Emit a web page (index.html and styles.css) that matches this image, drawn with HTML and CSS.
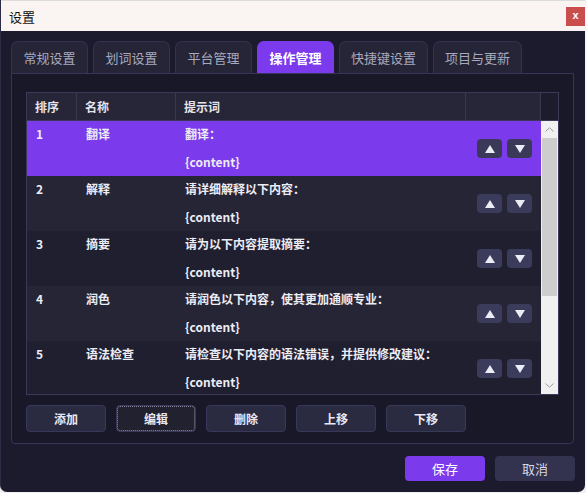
FILE: index.html
```html
<!DOCTYPE html>
<html lang="zh">
<head>
<meta charset="utf-8">
<title>设置</title>
<link rel="stylesheet" href="styles.css">
</head>
<body>
<div class="window">
  <div class="titlebar">
    <span class="title">设置</span>
    <span class="close">x</span>
  </div>
  <div class="main">
    <div class="tabs">
      <div class="tab">常规设置</div>
      <div class="tab">划词设置</div>
      <div class="tab">平台管理</div>
      <div class="tab active">操作管理</div>
      <div class="tab">快捷键设置</div>
      <div class="tab">项目与更新</div>
    </div>
    <div class="panel">
      <div class="table">
        <div class="thead">
          <div class="th">排序</div>
          <div class="th">名称</div>
          <div class="th">提示词</div>
          <div class="th"></div>
          <div class="th corner"></div>
        </div>
        <div class="tbody">
          <div class="rows">
            <div class="row selected">
              <div class="td">1</div>
              <div class="td">翻译</div>
              <div class="td">翻译：<br><br>{content}</div>
              <div class="td ops">
                <span class="arrow"><svg width="10" height="8" viewBox="0 0 10 8"><path d="M5 0 L10 8 L0 8 Z" fill="#ececf4"/></svg></span>
                <span class="arrow"><svg width="10" height="8" viewBox="0 0 10 8"><path d="M0 0 L10 0 L5 8 Z" fill="#ececf4"/></svg></span>
              </div>
            </div>
            <div class="row">
              <div class="td">2</div>
              <div class="td">解释</div>
              <div class="td">请详细解释以下内容：<br><br>{content}</div>
              <div class="td ops">
                <span class="arrow"><svg width="10" height="8" viewBox="0 0 10 8"><path d="M5 0 L10 8 L0 8 Z" fill="#ececf4"/></svg></span>
                <span class="arrow"><svg width="10" height="8" viewBox="0 0 10 8"><path d="M0 0 L10 0 L5 8 Z" fill="#ececf4"/></svg></span>
              </div>
            </div>
            <div class="row alt">
              <div class="td">3</div>
              <div class="td">摘要</div>
              <div class="td">请为以下内容提取摘要：<br><br>{content}</div>
              <div class="td ops">
                <span class="arrow"><svg width="10" height="8" viewBox="0 0 10 8"><path d="M5 0 L10 8 L0 8 Z" fill="#ececf4"/></svg></span>
                <span class="arrow"><svg width="10" height="8" viewBox="0 0 10 8"><path d="M0 0 L10 0 L5 8 Z" fill="#ececf4"/></svg></span>
              </div>
            </div>
            <div class="row">
              <div class="td">4</div>
              <div class="td">润色</div>
              <div class="td">请润色以下内容，使其更加通顺专业：<br><br>{content}</div>
              <div class="td ops">
                <span class="arrow"><svg width="10" height="8" viewBox="0 0 10 8"><path d="M5 0 L10 8 L0 8 Z" fill="#ececf4"/></svg></span>
                <span class="arrow"><svg width="10" height="8" viewBox="0 0 10 8"><path d="M0 0 L10 0 L5 8 Z" fill="#ececf4"/></svg></span>
              </div>
            </div>
            <div class="row alt">
              <div class="td">5</div>
              <div class="td">语法检查</div>
              <div class="td">请检查以下内容的语法错误，并提供修改建议：<br><br>{content}</div>
              <div class="td ops">
                <span class="arrow"><svg width="10" height="8" viewBox="0 0 10 8"><path d="M5 0 L10 8 L0 8 Z" fill="#ececf4"/></svg></span>
                <span class="arrow"><svg width="10" height="8" viewBox="0 0 10 8"><path d="M0 0 L10 0 L5 8 Z" fill="#ececf4"/></svg></span>
              </div>
            </div>
          </div>
          <div class="scrollbar">
            <div class="sb-btn"><svg width="9" height="5" viewBox="0 0 9 5"><path d="M0.5 4.5 L4.5 0.8 L8.5 4.5" fill="none" stroke="#9a9aa0" stroke-width="1"/></svg></div>
            <div class="sb-track"><div class="sb-thumb"></div></div>
            <div class="sb-btn"><svg width="9" height="5" viewBox="0 0 9 5"><path d="M0.5 0.5 L4.5 4.2 L8.5 0.5" fill="none" stroke="#9a9aa0" stroke-width="1"/></svg></div>
          </div>
        </div>
      </div>
      <div class="actions">
        <button class="btn">添加</button>
        <button class="btn focused">编辑</button>
        <button class="btn">删除</button>
        <button class="btn">上移</button>
        <button class="btn">下移</button>
      </div>
    </div>
    <div class="footer">
      <button class="fbtn primary">保存</button>
      <button class="fbtn">取消</button>
    </div>
  </div>
</div>
</body>
</html>
```
FILE: styles.css
```css
* { box-sizing: border-box; }
html, body { margin: 0; padding: 0; }
body {
  background: #f2f2f2;
  font-family: "Noto Sans CJK SC", sans-serif;
  width: 586px;
  height: 493px;
  overflow: hidden;
}
.window {
  width: 585px;
  height: 492px;
  background: #1b1b2d;
  border-radius: 0 0 7px 7px;
  border-left: 1px solid #2c2c44;
  overflow: hidden;
  display: flex;
  flex-direction: column;
}
.titlebar {
  height: 31px;
  background: #faf5f2;
  border-top: 1px solid #dcdcdc;
  display: flex;
  align-items: center;
  padding-left: 8px;
  flex-shrink: 0;
}
.title {
  font-family: "Noto Sans CJK SC", sans-serif;
  font-size: 13px;
  color: #111;
}
.close {
  margin-left: auto;
  width: 19px;
  height: 19px;
  background: #c94f4f;
  color: #fff;
  font-family: "Liberation Sans", sans-serif;
  font-weight: bold;
  font-size: 11px;
  display: flex;
  align-items: center;
  justify-content: center;
  line-height: 1;
  padding-bottom: 2px;
}
.main {
  padding: 10px 10px 0 10px;
  display: flex;
  flex-direction: column;
}
.tabs {
  display: flex;
  gap: 5px;
  height: 32px;
}
.tab {
  height: 32px;
  padding: 0 11px;
  min-width: 77px;
  background: #252537;
  border: 1px solid #33334e;
  border-bottom: none;
  border-radius: 7px 7px 0 0;
  color: #a9a9bd;
  font-family: "Noto Sans CJK SC", sans-serif;
  font-size: 13px;
  display: flex;
  align-items: center;
  justify-content: center;
}
.tab.active {
  background: #7c3aed;
  border-color: #7c3aed;
  color: #ffffff;
  font-weight: bold;
}
.panel {
  width: 563px;
  height: 371px;
  border: 1px solid #35355a;
  border-radius: 0 0 4px 4px;
  background: #181828;
  padding: 18px 14px 0 14px;
}
.table {
  width: 533px;
  height: 303px;
  border: 1px solid #3a3a58;
  background: #1f1f30;
  display: flex;
  flex-direction: column;
}
.thead {
  display: grid;
  grid-template-columns: 50px 99px 290px 75px 17px;
  height: 28px;
  background: #262638;
  border-bottom: 1px solid #3a3a58;
}
.th {
  color: #e4e4ee;
  font-weight: bold;
  font-size: 12px;
  padding-left: 8px;
  display: flex;
  align-items: center;
  border-right: 1px solid #38384f;
}
.th.corner {
  background: #1c1c2c;
  border-right: none;
}
.tbody {
  display: flex;
  height: 273px;
}
.rows {
  width: 514px;
  overflow: hidden;
}
.row {
  display: grid;
  grid-template-columns: 50px 99px 290px 75px;
  height: 55px;
  background: #252536;
}
.row.alt { background: #1f1f30; }
.row.selected { background: #7c3aed; }
.td {
  color: #ececf4;
  font-weight: bold;
  font-size: 12px;
  line-height: 14px;
  padding: 6px 0 0 9px;
}
.td.ops {
  padding: 0 9px 0 0;
  display: flex;
  align-items: center;
  justify-content: flex-end;
  gap: 5px;
}
.arrow {
  width: 25px;
  height: 19px;
  background: #3b3b5c;
  border-radius: 4px;
  display: flex;
  align-items: center;
  justify-content: center;
}
.row.selected .arrow { background: #3a3a58; }
.scrollbar {
  width: 17px;
  display: flex;
  flex-direction: column;
  background: #f0f0f0;
}
.sb-btn {
  height: 17px;
  display: flex;
  align-items: center;
  justify-content: center;
  background: #f0f0f0;
}
.sb-track {
  flex: 1;
  padding: 0 1px;
}
.sb-thumb {
  height: 158px;
  background: #cdcdcd;
}
.actions {
  display: flex;
  gap: 10px;
  margin-top: 10px;
}
.btn {
  width: 80px;
  height: 27px;
  background: #2a2a40;
  border: 1px solid #38385a;
  border-radius: 4px;
  color: #e8e8f2;
  font-family: "Noto Sans CJK SC", sans-serif;
  font-weight: bold;
  font-size: 12px;
  padding: 0;
}
.btn.focused {
  background: #21212f;
  outline: 1px dotted #8a8aa0;
  outline-offset: -2px;
}
.footer {
  display: flex;
  justify-content: flex-end;
  gap: 10px;
  margin-top: 12px;
}
.fbtn {
  width: 80px;
  height: 25px;
  border: none;
  border-radius: 4px;
  background: #33334f;
  color: #d8d8e6;
  font-family: "Noto Sans CJK SC", sans-serif;
  font-size: 13px;
  padding: 0;
}
.fbtn.primary {
  background: #7c3aed;
  color: #ffffff;
}
```
